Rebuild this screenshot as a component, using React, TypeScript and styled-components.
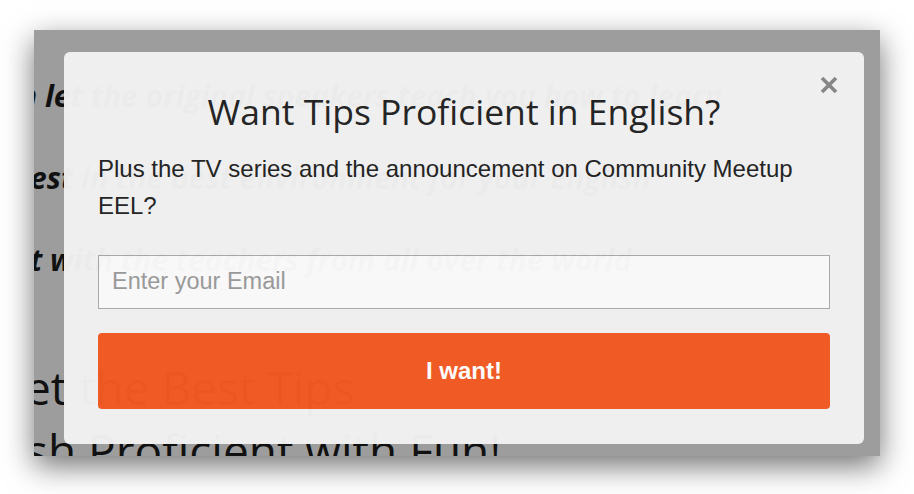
import React from "react";
import styled, { createGlobalStyle } from "styled-components";

const Global = createGlobalStyle`
  html, body { margin: 0; padding: 0; background: #ffffff; }
  body { font-family: "Open Sans", "DejaVu Sans", sans-serif; }
  #root { width: 914px; height: 494px; }
`;

const Stage = styled.div`
  width: 914px;
  height: 494px;
  box-sizing: border-box;
  padding: 30px 0 0 34px;
  overflow: hidden;
`;

const Window = styled.div`
  position: relative;
  width: 846px;
  height: 426px;
  background: #9d9d9d;
  overflow: hidden;
  box-shadow: 0 10px 28px rgba(0, 0, 0, 0.55);
`;

const PageContent = styled.div`
  display: flex;
  flex-direction: column;
  padding-top: 46px;
`;

const Lead = styled.p<{ $indent: number; $gap: number }>`
  margin: ${(p) => p.$gap}px 0 0 ${(p) => -p.$indent}px;
  font: italic 700 30px/40px "Open Sans", sans-serif;
  color: #111111;
  white-space: nowrap;
`;

const Headline = styled.h1<{ $indent: number; $gap: number }>`
  margin: ${(p) => p.$gap}px 0 0 ${(p) => -p.$indent}px;
  font: 400 46px/63px "Open Sans", sans-serif;
  color: #111111;
  white-space: nowrap;
`;

const Modal = styled.div`
  position: absolute;
  left: 30px;
  top: 22px;
  width: 800px;
  box-sizing: border-box;
  padding: 38px 34px 35px;
  background: #f2f2f2;
  border-radius: 6px;
  opacity: 0.975;
  display: flex;
  flex-direction: column;
`;

const Close = styled.button`
  position: absolute;
  top: 22px;
  right: 24px;
  width: 22px;
  height: 22px;
  padding: 0;
  border: none;
  background: transparent;
  cursor: pointer;
  display: flex;
  align-items: center;
  justify-content: center;
`;

const Title = styled.h2`
  margin: 0;
  font: 400 35.5px/42.6px "Open Sans", sans-serif;
  color: #222222;
  text-align: center;
`;

const Desc = styled.p`
  margin: 17px 0 0;
  font: 400 24px/37px "Liberation Sans", Arial, sans-serif;
  color: #222222;
`;

const EmailInput = styled.input`
  margin-top: 31px;
  height: 54px;
  box-sizing: border-box;
  border: 1px solid #ababab;
  background: #fbfbfb;
  padding: 0 13px;
  font: 400 23.5px "Liberation Sans", Arial, sans-serif;
  color: #333333;
  outline: none;
  &::placeholder { color: #9a9a9a; }
`;

const Submit = styled.button`
  margin-top: 24px;
  height: 76px;
  border: none;
  border-radius: 4px;
  background: #f35a22;
  color: #ffffff;
  font: 700 24px "Liberation Sans", Arial, sans-serif;
  cursor: pointer;
`;

export default function App() {
  return (
    <>
      <Global />
      <Stage>
        <Window>
          <PageContent>
            <Lead $indent={15} $gap={0}>n let the original speakers teach you how to learn</Lead>
            <Lead $indent={4} $gap={42}>est in the best environment for your English</Lead>
            <Lead $indent={4} $gap={42}>t with the teachers from all over the world</Lead>
            <Headline $indent={9} $gap={76}>et the Best Tips</Headline>
            <Headline $indent={8} $gap={0}>sh Proficient with Fun!</Headline>
          </PageContent>
          <Modal>
            <Close aria-label="Close">
              <svg width="20" height="20" viewBox="0 0 20 20">
                <path d="M3 3 L17 17 M17 3 L3 17" stroke="#868686" strokeWidth="3.6" strokeLinecap="butt" />
              </svg>
            </Close>
            <Title>Want Tips Proficient in English?</Title>
            <Desc>Plus the TV series and the announcement on Community Meetup EEL?</Desc>
            <EmailInput type="email" placeholder="Enter your Email" autoFocus />
            <Submit>I want!</Submit>
          </Modal>
        </Window>
      </Stage>
    </>
  );
}
